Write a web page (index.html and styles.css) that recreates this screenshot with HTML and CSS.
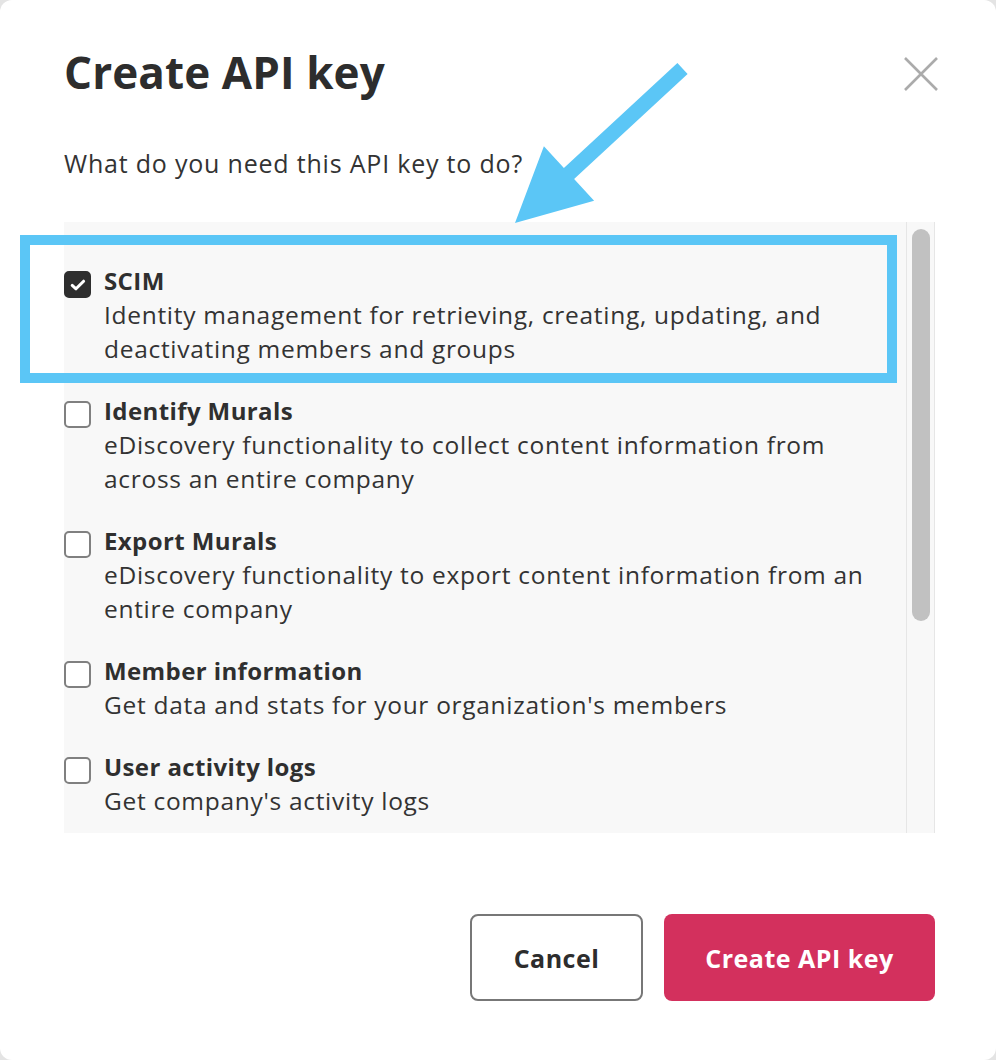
FILE: index.html
```html
<!DOCTYPE html>
<html lang="en">
<head>
<meta charset="utf-8">
<title>Create API key</title>
<link rel="stylesheet" href="styles.css">
</head>
<body>
<div class="modal">
  <div class="header">
    <h1 class="title">Create API key</h1>
    <button class="close" aria-label="Close">
      <svg width="34" height="34" viewBox="0 0 34 34"><path d="M1 1 L33 33 M33 1 L1 33" stroke="#ababab" stroke-width="2.6" fill="none"/></svg>
    </button>
  </div>
  <p class="subtitle">What do you need this API key to do?</p>

  <div class="list-area">
    <div class="list">
      <div class="item selected">
        <span class="box checked">
          <svg width="18" height="18" viewBox="0 0 18 18"><path d="M3.2 9.4 L7 12.8 L14.6 5.2" stroke="#fff" stroke-width="3" fill="none" stroke-linecap="round" stroke-linejoin="round"/></svg>
        </span>
        <div class="text">
          <div class="name">SCIM</div>
          <div class="desc">Identity management for retrieving, creating, updating, and deactivating members and groups</div>
        </div>
        <div class="highlight"></div>
      </div>
      <div class="item">
        <span class="box"></span>
        <div class="text">
          <div class="name">Identify Murals</div>
          <div class="desc">eDiscovery functionality to collect content information from across an entire company</div>
        </div>
      </div>
      <div class="item">
        <span class="box"></span>
        <div class="text">
          <div class="name">Export Murals</div>
          <div class="desc">eDiscovery functionality to export content information from an entire company</div>
        </div>
      </div>
      <div class="item">
        <span class="box"></span>
        <div class="text">
          <div class="name">Member information</div>
          <div class="desc">Get data and stats for your organization's members</div>
        </div>
      </div>
      <div class="item">
        <span class="box"></span>
        <div class="text">
          <div class="name">User activity logs</div>
          <div class="desc">Get company's activity logs</div>
        </div>
      </div>
    </div>
    <div class="scrollbar"><div class="thumb"></div></div>
  </div>

  <div class="footer">
    <button class="btn btn-cancel">Cancel</button>
    <button class="btn btn-primary">Create API key</button>
  </div>

  <svg class="arrow" width="996" height="1060" viewBox="0 0 996 1060">
    <polygon points="677.4,63 687.6,74 574.1,179 594.1,200.7 515,223 543.9,146.3 563.9,168" fill="#5bc6f6"/>
  </svg>
</div>
</body>
</html>
```

FILE: styles.css
```css
* { box-sizing: border-box; }

html, body {
  margin: 0;
  padding: 0;
}

body {
  background: #e4e4e4;
  font-family: "Open Sans", "Lato", sans-serif;
  color: #333333;
}

.modal {
  position: relative;
  width: 996px;
  height: 1060px;
  background: #ffffff;
  border-radius: 12px;
  padding: 44px 61px 0 64px;
  display: flex;
  flex-direction: column;
}

.header {
  display: flex;
  justify-content: space-between;
  align-items: flex-start;
}

.title {
  margin: 0;
  font-size: 44px;
  line-height: 56px;
  font-weight: 700;
  color: #2d2d2d;
  letter-spacing: 0.1px;
}

.close {
  margin: 13px -3px 0 0;
  padding: 0;
  border: 0;
  background: transparent;
  width: 34px;
  height: 34px;
}

.subtitle {
  margin: 48px 0 0 0;
  font-size: 25px;
  line-height: 30px;
  letter-spacing: 0.8px;
}

.list-area {
  margin-top: 44px;
  height: 611px;
  display: flex;
  background: #f8f8f8;
}

.list {
  flex: 1;
  padding: 42px 0 0 0;
  display: flex;
  flex-direction: column;
  gap: 28px;
}

.item {
  position: relative;
  display: flex;
  gap: 13px;
}

.box {
  flex: none;
  width: 27px;
  height: 27px;
  margin-top: 7px;
  border: 2px solid #808080;
  border-radius: 5px;
  background: #ffffff;
  display: flex;
  align-items: center;
  justify-content: center;
}

.box.checked {
  background: #2e2e2e;
  border-color: #2e2e2e;
}

.text {
  flex: 1;
  padding-right: 40px;
}

.name {
  font-size: 24px;
  line-height: 34px;
  font-weight: 700;
  color: #2f2f2f;
  letter-spacing: 0.4px;
}

.desc {
  font-size: 24.5px;
  line-height: 34px;
  letter-spacing: 0.7px;
}

.highlight {
  position: absolute;
  left: -44px;
  top: -29px;
  width: 877px;
  height: 148px;
  border: 10px solid #5bc6f6;
  pointer-events: none;
}

.scrollbar {
  flex: none;
  width: 29px;
  border-left: 1px solid #e6e6e6;
  border-right: 1px solid #e6e6e6;
  padding: 7px 4px 0 5px;
}

.thumb {
  height: 392px;
  border-radius: 9px;
  background: #c1c1c1;
}

.footer {
  margin-top: 81px;
  display: flex;
  justify-content: flex-end;
  gap: 21px;
}

.btn {
  height: 87px;
  border-radius: 8px;
  font-family: "Open Sans", "Lato", sans-serif;
  font-size: 25px;
  font-weight: 700;
  letter-spacing: 0.5px;
  cursor: pointer;
}

.btn-cancel {
  width: 173px;
  background: #ffffff;
  border: 2px solid #777777;
  color: #2d2d2d;
}

.btn-primary {
  width: 271px;
  background: #d3305d;
  border: 0;
  color: #ffffff;
}

.arrow {
  position: absolute;
  left: 0;
  top: 0;
  pointer-events: none;
}
```
